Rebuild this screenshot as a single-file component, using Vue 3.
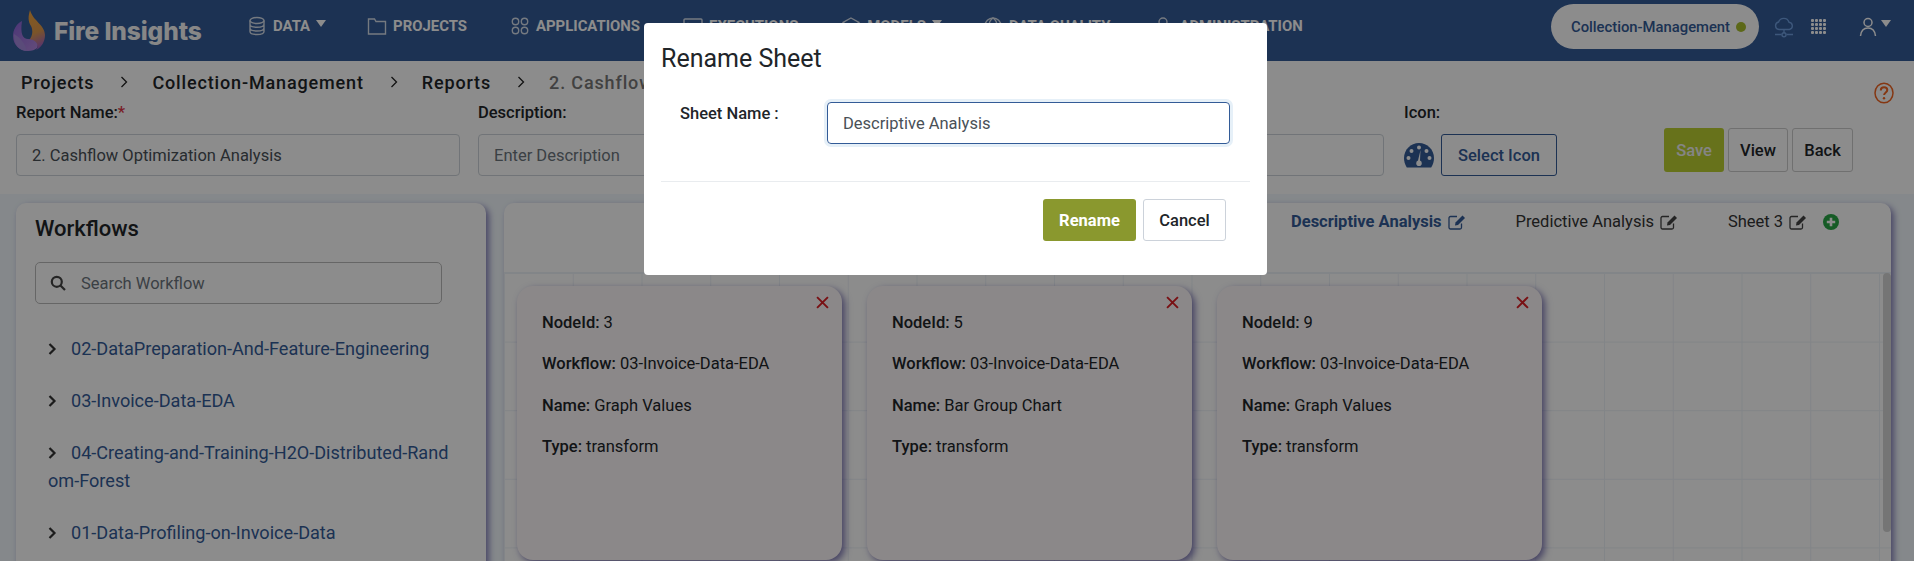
<script setup>
const navItems = [
  { label: 'DATA', icon: 'db', caret: true },
  { label: 'PROJECTS', icon: 'folder' },
  { label: 'APPLICATIONS', icon: 'apps' },
  { label: 'EXECUTIONS', icon: 'exec' },
  { label: 'MODELS', icon: 'model', caret: true },
  { label: 'DATA QUALITY', icon: 'quality' },
  { label: 'ADMINISTRATION', icon: 'admin' }
]
const crumbs = ['Projects', 'Collection-Management', 'Reports']
const tabs = [
  { label: 'Descriptive Analysis', active: true },
  { label: 'Predictive Analysis' },
  { label: 'Sheet 3' }
]
const workflows = [
  '02-DataPreparation-And-Feature-Engineering',
  '03-Invoice-Data-EDA',
  '04-Creating-and-Training-H2O-Distributed-Random-Forest',
  '01-Data-Profiling-on-Invoice-Data'
]
const cards = [
  { id: 3, name: 'Graph Values' },
  { id: 5, name: 'Bar Group Chart' },
  { id: 9, name: 'Graph Values' }
]
</script>

<template>
  <div class="page">
    <header class="topbar">
      <div class="brand">
        <svg class="flame" viewBox="0 0 32 41" width="32" height="41">
          <defs>
            <linearGradient id="fl1" x1="0.4" y1="0" x2="0.6" y2="1">
              <stop offset="0" stop-color="#f0a33e" />
              <stop offset="0.55" stop-color="#e09a4c" />
              <stop offset="1" stop-color="#9a5ad0" />
            </linearGradient>
            <linearGradient id="fl2" x1="0" y1="0" x2="1" y2="1">
              <stop offset="0" stop-color="#8a63d8" />
              <stop offset="1" stop-color="#b58ae0" />
            </linearGradient>
          </defs>
          <path d="M17 0C15 7 15 11 18 16C20 20 20 26 16 30C22 31 27 36 23 40C29 37 32 31 32 25C32 15 20 11 17 0Z" fill="url(#fl1)" />
          <path d="M9 11C3 14 0 20 0 26C0 35 7 41 15 41C19 41 22 40 24 38C26 33 21 29 15 29C10 29 7 24 9 11Z" fill="url(#fl2)" />
          <path d="M1 24C6 27 11 31 14 41C7 41 1 35 1 26Z" fill="#a489dd" />
        </svg>
        <span class="brand-name">Fire Insights</span>
      </div>
      <nav class="nav">
        <div v-for="item in navItems" :key="item.label" class="nav-item">
          <svg class="nav-icon" viewBox="0 0 20 20" width="20" height="20" fill="none" stroke="currentColor" stroke-width="1.4">
            <template v-if="item.icon === 'db'">
              <ellipse cx="10" cy="4.500" rx="7" ry="3" />
              <path d="M3 4.500v11c0 1.700 3.100 3 7 3s7-1.300 7-3v-11M3 8.200c0 1.700 3.100 3 7 3s7-1.300 7-3M3 12c0 1.700 3.100 3 7 3s7-1.300 7-3" />
            </template>
            <path v-else-if="item.icon === 'folder'" d="M1.500 3h6l1.500 2.500h9.500v12.500h-17z" />
            <template v-else-if="item.icon === 'apps'">
              <circle cx="5.500" cy="5.500" r="3.200" /><circle cx="14.500" cy="5.500" r="3.200" />
              <circle cx="5.500" cy="14.500" r="3.200" /><circle cx="14.500" cy="14.500" r="3.200" />
            </template>
            <template v-else-if="item.icon === 'exec'">
              <rect x="1" y="3" width="18" height="14" rx="1" /><path d="M4.500 7l3 3-3 3M10 13h5" />
            </template>
            <path v-else-if="item.icon === 'model'" d="M10 2l8 4.500v7L10 18l-8-4.500v-7zM2 6.500L10 11l8-4.500M10 11v7" />
            <template v-else-if="item.icon === 'quality'">
              <circle cx="10" cy="10" r="8" /><path d="M2 10h16M10 2c-3 2-4 5-4 8s1 6 4 8c3-2 4-5 4-8s-1-6-4-8z" />
            </template>
            <template v-else>
              <circle cx="10" cy="6" r="4" /><path d="M3 18c0-4 3-6.500 7-6.500s7 2.500 7 6.500" />
            </template>
          </svg>
          <span>{{ item.label }}</span>
          <i v-if="item.caret" class="caret"></i>
        </div>
      </nav>
      <div class="status-pill">
        <span>Collection-Management</span>
        <i class="status-dot"></i>
      </div>
      <svg class="tool-icon cloud" viewBox="0 0 20 22" width="20" height="22" fill="none" stroke="#6f9fe0" stroke-width="1.400">
        <path d="M5 13.500a3.800 3.800 0 0 1-.4-7.500A5.500 5.500 0 0 1 15 6.200a3.700 3.700 0 0 1 .4 7.300zM10 13.500v4M1 18.500h6.500M12.500 18.500H19" />
        <circle cx="10" cy="18.800" r="2" />
      </svg>
      <div class="apps-grid"><i v-for="n in 16" :key="n"></i></div>
      <div class="user">
        <svg viewBox="0 0 18 20" width="18" height="20" fill="none" stroke="#fff" stroke-width="1.500">
          <circle cx="9" cy="5.500" r="4" /><path d="M1.500 19c.5-5 3.500-8 7.500-8s7 3 7.500 8" />
        </svg>
        <i class="caret"></i>
      </div>
    </header>

    <section class="report-head">
      <div class="crumbs">
        <template v-for="c in crumbs" :key="c">
          <span>{{ c }}</span>
          <svg viewBox="0 0 8 12" width="8" height="12" fill="none" stroke="#222" stroke-width="1.300"><path d="M1.500 1l5 5-5 5" /></svg>
        </template>
        <span class="crumb-current">2. Cashflow</span>
      </div>
      <div class="form-row">
        <label class="field">
          <span class="field-label">Report Name:<em>*</em></span>
          <span class="text-input">2. Cashflow Optimization Analysis</span>
        </label>
        <label class="field">
          <span class="field-label">Description:</span>
          <span class="text-input muted">Enter Description</span>
        </label>
        <label class="field">
          <span class="field-label"></span>
          <span class="text-input"></span>
        </label>
        <div class="icon-field">
          <span class="field-label">Icon:</span>
          <div class="icon-row">
            <svg viewBox="0 0 30 25" width="30" height="25">
              <path d="M15 0C6.700 0 0 6.700 0 15c0 3.500 1 6.700 2.800 9.500h24.400C29 21.700 30 18.500 30 15 30 6.700 23.300 0 15 0z" fill="#335b97" />
              <g fill="#fff">
                <circle cx="15" cy="4.500" r="2" /><circle cx="7.500" cy="8" r="2" /><circle cx="22.500" cy="8" r="2" />
                <circle cx="4.500" cy="15" r="2" /><circle cx="25.500" cy="15" r="2" />
                <path d="M16.500 7l-.5 10.500a2.800 2.800 0 0 1 1.800 2.700 2.800 2.800 0 0 1-5.600 0 2.800 2.800 0 0 1 1.800-2.700z" />
              </g>
            </svg>
            <span class="select-icon">Select Icon</span>
          </div>
        </div>
        <div class="actions">
          <span class="btn btn-save">Save</span>
          <span class="btn btn-plain">View</span>
          <span class="btn btn-plain">Back</span>
        </div>
      </div>
      <svg class="help" viewBox="0 0 20 22" width="20" height="22" fill="none" stroke="#f26522" stroke-width="1.500">
        <ellipse cx="10" cy="11" rx="9" ry="9.800" />
        <path d="M6.800 8.500c0-2 1.400-3.200 3.300-3.200s3.200 1.200 3.200 2.800c0 2.400-3.200 2.400-3.200 5" stroke-width="2" />
        <circle cx="10" cy="16.300" r="1.200" fill="#f26522" stroke="none" />
      </svg>
    </section>

    <main class="workspace">
      <aside class="workflows">
        <h2>Workflows</h2>
        <div class="search">
          <svg viewBox="0 0 16 16" width="16" height="16" fill="none" stroke="#444" stroke-width="2.200">
            <circle cx="6.800" cy="6.800" r="5" /><path d="M10.500 10.500L15 15" />
          </svg>
          <span>Search Workflow</span>
        </div>
        <ul class="tree">
          <li v-for="w in workflows" :key="w">
            <svg viewBox="0 0 9 12" width="9" height="12" fill="none" stroke="#333" stroke-width="2.200"><path d="M1.500 1l5 5-5 5" /></svg>{{ w }}
          </li>
        </ul>
      </aside>

      <section class="board">
        <div class="tabs">
          <div v-for="t in tabs" :key="t.label" class="tab" :class="{ active: t.active }">
            <span>{{ t.label }}</span>
            <svg viewBox="0 0 18 16" width="18" height="16" fill="none" stroke="currentColor" stroke-width="1.300">
              <path d="M13.500 9.500v4a1.500 1.500 0 0 1-1.500 1.500H2.500A1.500 1.500 0 0 1 1 13.500V4a1.500 1.500 0 0 1 1.500-1.500h6.500" />
              <path d="M7 11.500l.5-3 7-7 2.500 2.500-7 7z" fill="currentColor" stroke="none" />
            </svg>
          </div>
          <svg class="add-sheet" viewBox="0 0 16 16" width="16" height="16">
            <circle cx="8" cy="8" r="8" fill="#28a745" />
            <path d="M8 3.800v8.400M3.800 8h8.400" stroke="#fff" stroke-width="2.600" />
          </svg>
        </div>
        <div class="canvas">
          <article v-for="c in cards" :key="c.id" class="node-card">
            <svg class="node-close" viewBox="0 0 12 12" width="13" height="13" fill="none" stroke="#dc1f26" stroke-width="1.800">
              <path d="M1 1l10 10M11 1L1 11" />
            </svg>
            <p><b>NodeId:</b> {{ c.id }}</p>
            <p><b>Workflow:</b> 03-Invoice-Data-EDA</p>
            <p><b>Name:</b> {{ c.name }}</p>
            <p><b>Type:</b> transform</p>
          </article>
          <div class="scroll-thumb"></div>
        </div>
      </section>
    </main>

    <div class="backdrop">
      <div class="modal">
        <h3>Rename Sheet</h3>
        <div class="modal-body">
          <span class="modal-label">Sheet Name :</span>
          <span class="modal-input">Descriptive Analysis</span>
        </div>
        <div class="modal-foot">
          <span class="btn btn-rename">Rename</span>
          <span class="btn btn-cancel">Cancel</span>
        </div>
      </div>
    </div>
  </div>
</template>

<style>
html, body { margin: 0; padding: 0; }
</style>

<style scoped>
* { box-sizing: border-box; }
.page {
  position: relative;
  width: 1914px;
  height: 561px;
  overflow: hidden;
  font-family: Roboto, "Liberation Sans", sans-serif;
  background: #f2f8fd;
  color: #212529;
  display: flex;
  flex-direction: column;
}
.topbar {
  height: 61px;
  background: #335b97;
  color: #fff;
  display: flex;
  align-items: center;
  flex: none;
}
.brand { display: flex; align-items: center; width: 247px; padding-left: 13px; gap: 9px; }
.brand-name { font-family: Inter, sans-serif; font-weight: 800; font-size: 24.500px; letter-spacing: -0.1px; white-space: nowrap; color: #f6f6f6; }
.nav { display: flex; gap: 43px; font-size: 14.900px; font-weight: 700; width: 1304px; margin-top: -10px; }
.nav-item { display: flex; align-items: center; white-space: nowrap; }
.nav-icon { margin-right: 6px; opacity: .8; }
.caret {
  display: inline-block;
  width: 0;
  height: 0;
  border-left: 5.500px solid transparent;
  border-right: 5.500px solid transparent;
  border-top: 7px solid #fff;
  margin-left: 6px;
  margin-top: -4px;
}
.nav-item .caret { margin-right: -2px; }
.status-pill {
  width: 208px;
  height: 45px;
  margin-top: -8px;
  border-radius: 23px;
  background: #fff;
  color: #335b97;
  display: flex;
  align-items: center;
  padding-left: 20px;
  font-size: 14.800px;
  font-weight: 500;
  white-space: nowrap;
}
.status-dot { width: 10px; height: 10px; border-radius: 50%; background: #a8bd2c; margin-left: 6px; }
.tool-icon.cloud { margin-left: 15px; margin-top: -8px; }
.apps-grid {
  display: grid;
  grid-template-columns: repeat(4, 3px);
  gap: 1px;
  margin-left: 17px;
  margin-top: -8px;
}
.apps-grid i { width: 3px; height: 3px; background: #fff; border-radius: 1px; }
.user { display: flex; align-items: center; margin-left: 33px; margin-top: -8px; }
.user .caret { margin-left: 4px; margin-top: -6px; }

.report-head {
  position: relative;
  height: 133px;
  flex: none;
  background: #fff;
  padding: 11px 16px 0;
}
.crumbs {
  display: flex;
  align-items: center;
  padding-left: 5px;
  height: 20px;
  font-size: 18px;
  font-weight: 500;
  letter-spacing: .85px;
  white-space: nowrap;
}
.crumbs svg { margin: 0 24px 0 26px; }
.crumb-current { color: #777; }
.form-row { display: flex; margin-top: 9px; }
.field { width: 444px; margin-right: 18px; display: flex; flex-direction: column; flex: none; }
.field-label { display: block; font-size: 16.500px; font-weight: 500; line-height: 24px; height: 33px; }
.field-label em { color: #dc3545; font-style: normal; }
.text-input {
  height: 42px;
  border: 1px solid #ced4da;
  border-radius: 4px;
  padding: 0 15px;
  display: flex;
  align-items: center;
  font-size: 16.500px;
  color: #495057;
}
.text-input.muted { color: #6c757d; }
.icon-field { width: 262px; flex: none; padding-left: 2px; }
.icon-row { display: flex; align-items: center; gap: 7px; }
.select-icon {
  width: 116px;
  height: 42px;
  border: 1px solid #335b97;
  border-radius: 3px;
  color: #335b97;
  font-size: 16.500px;
  font-weight: 500;
  display: flex;
  align-items: center;
  justify-content: center;
}
.actions { display: flex; gap: 4px; margin-top: 27px; height: 44px; }
.btn { display: flex; align-items: center; justify-content: center; border-radius: 3px; font-size: 16.500px; font-weight: 500; }
.btn-save { width: 60px; background: #bcd032; color: #f2f2f2; }
.btn-plain { width: 60px; border: 1px solid #ccc; }
.btn-plain:last-child { width: 61px; }
.help { position: absolute; right: 20px; top: 21px; }

.workspace { flex: 1; display: flex; gap: 18px; padding: 9px 23px 0 16px; min-height: 0; }
.workflows {
  width: 470px;
  flex: none;
  background: #fff;
  border-radius: 10px 10px 0 0;
  box-shadow: 3px 3px 6px rgba(60, 50, 140, .6);
  padding: 12px 19px;
  height: 400px;
}
.workflows h2 { margin: 0; font-size: 22px; font-weight: 500; line-height: 27px; }
.search {
  margin-top: 20px;
  width: 407px;
  height: 42px;
  border: 1px solid #bbb;
  border-radius: 5px;
  display: flex;
  align-items: center;
  gap: 15px;
  padding-left: 14px;
  color: #6c757d;
  font-size: 16.500px;
}
.tree {
  list-style: none;
  margin: 0;
  padding: 31px 0 0 13px;
  width: 417px;
  color: #335b97;
  font-size: 18.100px;
  line-height: 28px;
  word-break: break-all;
}
.tree li { margin-bottom: 24px; }
.tree svg { margin-right: 14px; }
.board {
  flex: 1;
  background: #fff;
  border-radius: 10px 10px 0 0;
  box-shadow: 3px 3px 6px rgba(60, 50, 140, .6);
  display: flex;
  flex-direction: column;
  min-width: 0;
  height: 400px;
}
.tabs {
  height: 70px;
  flex: none;
  padding: 10px 0 0 787px;
  display: flex;
  align-items: flex-start;
  font-size: 16.500px;
  border-bottom: 1px solid #edf2f7;
}
.tab { display: flex; align-items: center; gap: 6px; margin-right: 50px; height: 18px; color: #333; line-height: 18px; }
.tab.active { font-weight: 700; color: #335b97; }
.tab svg { color: #444; }
.tab.active svg { color: #335b97; }
.tab:nth-of-type(3) { margin-right: 16px; }
.add-sheet { margin-top: 1px; }
.canvas {
  position: relative;
  flex: 1;
  display: flex;
  gap: 25.500px;
  padding: 13px 0 0 13px;
  overflow: hidden;
  background-image:
    linear-gradient(to right, #edf2f7 1px, transparent 1px),
    linear-gradient(to bottom, #edf2f7 1px, transparent 1px);
  background-size: 68.750px 68.600px;
}
.node-card {
  position: relative;
  width: 324.500px;
  height: 274px;
  flex: none;
  background: #fdf8f9;
  border-radius: 16px;
  box-shadow: 3px 3px 7px rgba(60, 50, 140, .65);
  padding: 26px 25px;
  font-size: 16.500px;
}
.node-card p { margin: 0 0 20.300px; line-height: 21px; }
.node-card b { font-weight: 500; }
.node-close { position: absolute; top: 10px; right: 13px; }
.scroll-thumb {
  position: absolute;
  right: 0;
  top: 0;
  width: 8px;
  height: 259px;
  border-radius: 4px;
  background: #d6d6d6;
}

.backdrop {
  position: absolute;
  inset: 0;
  background: rgba(0, 0, 0, .45);
  display: flex;
  justify-content: center;
  padding: 23px 3px 0 0;
}
.modal {
  width: 623px;
  height: 252px;
  background: #fff;
  border-radius: 4px;
  padding: 0 17px;
  display: flex;
  flex-direction: column;
}
.modal h3 { margin: 21px 0 0; font-size: 25px; font-weight: 400; line-height: 30px; color: #212529; }
.modal-body { display: flex; padding-top: 28px; padding-left: 19px; border-bottom: 1px solid #e9ecef; height: 108px; }
.modal-label { width: 147px; font-size: 16.500px; font-weight: 500; line-height: 24px; height: 24px; }
.modal-input {
  width: 403px;
  height: 42px;
  border: 1px solid #335b97;
  border-radius: 4px;
  box-shadow: 0 0 0 3px #e6f0f8;
  padding-left: 15px;
  display: flex;
  align-items: center;
  font-size: 16.500px;
  color: #495057;
}
.modal-foot { display: flex; justify-content: flex-end; gap: 7px; padding: 17px 24px 0 0; }
.btn-rename { width: 93px; height: 42px; background: #8a982e; color: #fff; font-weight: 700; }
.btn-cancel { width: 83px; height: 42px; border: 1px solid #ccd2da; color: #212529; }
</style>
